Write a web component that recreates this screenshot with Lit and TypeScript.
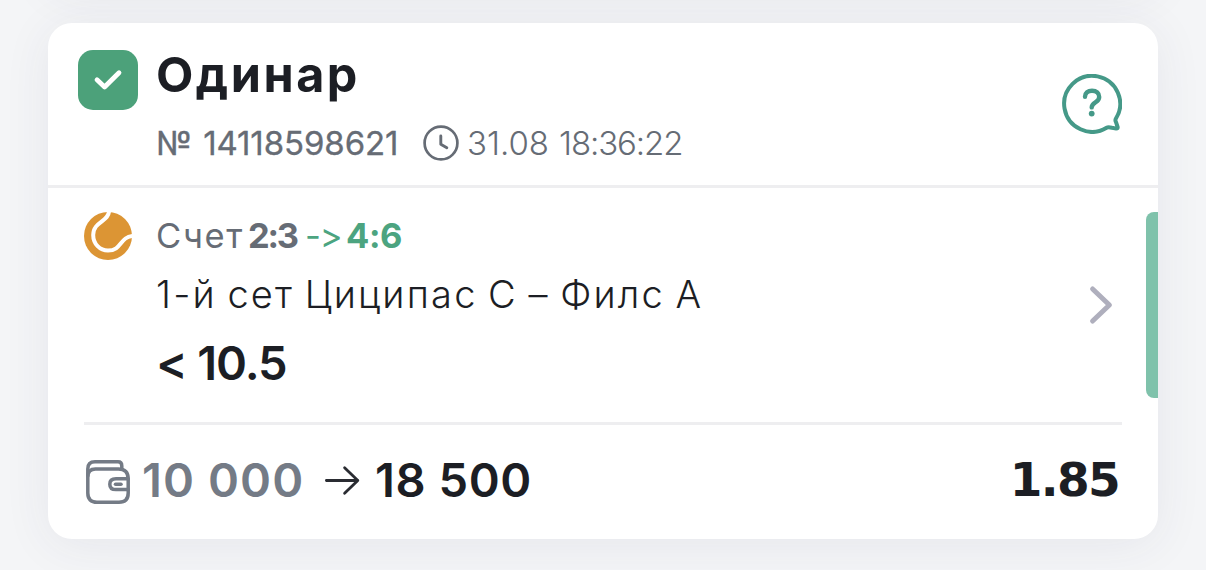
import { LitElement, css, html } from 'lit';
import { customElement, property } from 'lit/decorators.js';

interface Bet {
  type: string;
  id: string;
  date: string;
  time: string;
  score: string;
  finalScore: string;
  event: string;
  selection: string;
  stake: string;
  payout: string;
  odds: string;
}

const BET: Bet = {
  type: 'Одинар',
  id: '14118598621',
  date: '31.08',
  time: '18:36:22',
  score: '2:3',
  finalScore: '4:6',
  event: '1-й сет Циципас С – Филс А',
  selection: '< 10.5',
  stake: '10 000',
  payout: '18 500',
  odds: '1.85',
};

/**
 * Header of the card: status, bet type, number and date.
 */
@customElement('bet-header')
export class BetHeader extends LitElement {
  @property({ type: Object }) bet!: Bet;

  static styles = css`
    :host {
      display: flex;
      box-sizing: border-box;
      height: 165px;
      padding: 24px 36px 0 30px;
      border-bottom: 3px solid #eeeef0;
    }

    svg {
      display: block;
      flex: none;
    }

    .status {
      margin-top: 3px;
    }

    .info {
      flex: 1;
      margin-left: 18px;
    }

    .title {
      margin: 0;
      font-size: 48.5px;
      line-height: 56px;
      font-weight: 700;
      letter-spacing: 2.5px;
      color: #1c1e24;
    }

    .meta {
      display: flex;
      align-items: center;
      height: 40px;
      margin-top: 20px;
      font-size: 33px;
      line-height: 40px;
      color: #666c75;
      white-space: nowrap;
    }

    .number {
      width: 267px;
      font-weight: 400;
      word-spacing: 2px;
      letter-spacing: -0.1px;
      -webkit-text-stroke: 0.3px #666c75;
    }

    .clock {
      margin-right: 8px;
    }

    .date {
      width: 92px;
      font-weight: 300;
    }

    .time {
      font-weight: 300;
      letter-spacing: -1.1px;
    }

    .help {
      margin-top: 27px;
    }
  `;

  render() {
    return html`
      <svg class="status" width="60" height="60" viewBox="0 0 60 60">
        <rect width="60" height="60" rx="15" fill="#4ca17a" />
        <path
          d="M19 29.8l7.6 7.2L41 22.8"
          fill="none"
          stroke="#fff"
          stroke-width="4.8"
          stroke-linecap="round"
          stroke-linejoin="round"
        />
      </svg>
      <div class="info">
        <h1 class="title">${this.bet.type}</h1>
        <div class="meta">
          <span class="number">№ ${this.bet.id}</span>
          <svg class="clock" width="36" height="36" viewBox="0 0 36 36">
            <g fill="none" stroke="#666c75" stroke-linecap="round" stroke-linejoin="round">
              <circle cx="18" cy="18" r="16.4" stroke-width="2.7" />
              <path d="M17.8 11v8.3l6 3.5" stroke-width="2.9" />
            </g>
          </svg>
          <span class="date">${this.bet.date}</span>
          <span class="time">${this.bet.time}</span>
        </div>
      </div>
      <svg class="help" width="60" height="60" viewBox="0 0 60 60">
        <g fill="none" stroke="#459988" stroke-linecap="round" stroke-linejoin="round">
          <path
            d="M53.8 44.8A28 28 0 1 0 44.6 53.8C46.2 52.8 48 53.3 50 53.8L54.3 54.6Q56 54.6 55.6 53L54 48.2Q53 46.2 53.8 44.8Z"
            stroke-width="4"
          />
          <path d="M23 22.8C23 18.8 26 16.8 30 16.8C34.5 16.8 37.2 19.3 37.2 22.9C37.2 28.8 29.7 27.8 29.7 33.4" stroke-width="4.4" />
        </g>
        <circle cx="29.7" cy="39.6" r="2.9" fill="#459988" />
      </svg>
    `;
  }
}

/**
 * Event row with the score, the match and the selected outcome.
 */
@customElement('bet-event')
export class BetEvent extends LitElement {
  @property({ type: Object }) bet!: Bet;

  static styles = css`
    :host {
      display: flex;
      box-sizing: border-box;
      height: 234px;
      padding: 24px 0 0 36px;
    }

    svg {
      display: block;
      flex: none;
    }

    .details {
      flex: 1;
      margin: 2px 0 0 24px;
      white-space: nowrap;
    }

    .score {
      display: flex;
      height: 44px;
      font-size: 34.5px;
      line-height: 44px;
      color: #666c75;
    }

    .label {
      width: 92px;
      letter-spacing: 1.7px;
    }

    .current {
      width: 57px;
      font-weight: 700;
      letter-spacing: -2.2px;
    }

    .arrow {
      width: 41px;
      font-variant-ligatures: none;
      font-feature-settings: 'calt' 0;
      letter-spacing: -1px;
      color: #4ca480;
    }

    .final {
      font-weight: 700;
      letter-spacing: -0.4px;
      color: #4ca480;
    }

    .event {
      margin-top: 12px;
      font-size: 38px;
      line-height: 48px;
      font-weight: 330;
      letter-spacing: 2.2px;
      word-spacing: -2.4px;
      color: #1c1e24;
    }

    .selection {
      margin-top: 17px;
      font-size: 47px;
      line-height: 56px;
      font-weight: 600;
      letter-spacing: -1.1px;
      color: #1c1e24;
    }

    .chevron {
      margin: 73px 33px 0 0;
    }

    .result {
      width: 12px;
      height: 186px;
      border-radius: 8px 0 0 8px;
      background: #7fc2ab;
    }
  `;

  render() {
    return html`
      <svg width="48" height="48" viewBox="0 0 48 48">
        <circle cx="24" cy="24" r="24" fill="#dc9534" />
        <path
          d="M25 -1C25 9.5 9.2 9.5 9.2 23C9.2 32 16 38.6 24 38.6C38 38.6 35.5 25 49 23.8"
          fill="none"
          stroke="#fff"
          stroke-width="4"
        />
      </svg>
      <div class="details">
        <div class="score">
          <span class="label">Счет</span>
          <span class="current">${this.bet.score}</span>
          <span class="arrow">-&gt;</span>
          <span class="final">${this.bet.finalScore}</span>
        </div>
        <div class="event">${this.bet.event}</div>
        <div class="selection">${this.bet.selection}</div>
      </div>
      <svg class="chevron" width="24" height="40" viewBox="0 0 24 40">
        <path
          d="M3.6 4L20.4 20L3.6 36"
          fill="none"
          stroke="#afafbd"
          stroke-width="5"
          stroke-linecap="round"
          stroke-linejoin="round"
        />
      </svg>
      <div class="result"></div>
    `;
  }
}

/**
 * Footer with the stake, the payout and the odds.
 */
@customElement('bet-totals')
export class BetTotals extends LitElement {
  @property({ type: Object }) bet!: Bet;

  static styles = css`
    :host {
      display: flex;
      align-items: center;
      box-sizing: border-box;
      height: 117px;
      margin: 0 36px;
      padding-bottom: 4px;
      border-top: 3px solid #eeeef0;
      font-size: 47px;
      line-height: 56px;
      font-weight: 600;
      color: #1c1e24;
      white-space: nowrap;
    }

    svg {
      display: block;
      flex: none;
    }

    .wallet {
      margin-top: 4px;
    }

    .stake {
      width: 182px;
      margin-left: 10px;
      letter-spacing: 1.1px;
      color: #747b86;
    }

    .payout {
      margin-left: 15px;
      letter-spacing: 0.6px;
    }

    .odds {
      margin-left: auto;
      padding-right: 3px;
      font-family: 'DejaVu Sans', sans-serif;
      font-weight: 700;
      letter-spacing: -1.7px;
    }
  `;

  render() {
    return html`
      <svg class="wallet" width="48" height="48" viewBox="0 0 48 48">
        <g fill="none" stroke="#747b86" stroke-width="3.5" stroke-linecap="round" stroke-linejoin="round">
          <path d="M3.8 18V11Q3.8 3.8 11 3.8H34Q37.8 3.8 37.8 8V11" />
          <path d="M3.8 19Q3.8 11 11.5 11H34.5Q44.2 11 44.2 21V35Q44.2 44.2 35 44.2H13Q3.8 44.2 3.8 35Z" />
          <path d="M44.2 20.8H32Q25.8 20.8 25.8 26.2Q25.8 31.6 32 31.6H44.2" />
          <path d="M31.5 26.2H37" />
        </g>
      </svg>
      <span class="stake">${this.bet.stake}</span>
      <svg width="36" height="32" viewBox="0 0 36 32">
        <path
          d="M2.4 16.5H33.8M20.6 3.7L33.8 16.5L20.6 29.3"
          fill="none"
          stroke="#2a2c32"
          stroke-width="2.8"
          stroke-linecap="round"
          stroke-linejoin="round"
        />
      </svg>
      <span class="payout">${this.bet.payout}</span>
      <span class="odds">${this.bet.odds}</span>
    `;
  }
}

@customElement('app-root')
export class AppRoot extends LitElement {
  static styles = css`
    :host {
      display: flex;
      flex-direction: column;
      gap: 36px;
      box-sizing: border-box;
      width: 1206px;
      height: 570px;
      padding: 0 48px;
      overflow: hidden;
      background: #f4f5f7;
      font-family: Inter, 'Noto Sans', sans-serif;
    }

    .card {
      flex: none;
      overflow: hidden;
      border-radius: 24px;
      background: #fff;
      box-shadow: 0 6px 48px rgba(60, 60, 90, 0.075);
    }

    .previous {
      height: 60px;
      margin-top: -73px;
    }
  `;

  render() {
    return html`
      <div class="card previous"></div>
      <div class="card">
        <bet-header .bet=${BET}></bet-header>
        <bet-event .bet=${BET}></bet-event>
        <bet-totals .bet=${BET}></bet-totals>
      </div>
    `;
  }
}
